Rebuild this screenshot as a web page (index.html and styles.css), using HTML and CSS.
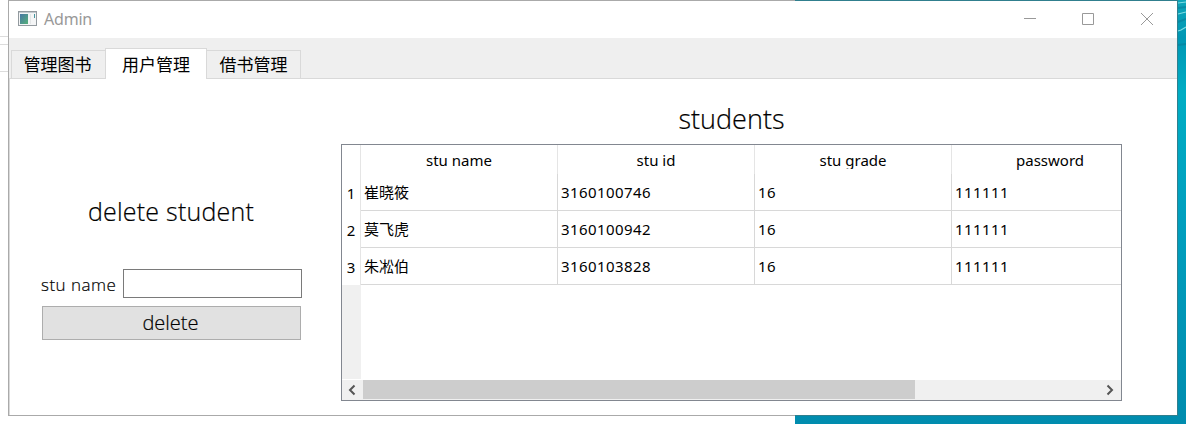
FILE: index.html
```html
<!DOCTYPE html>
<html lang="zh-CN">
<head>
<meta charset="utf-8">
<title>Admin</title>
<link rel="stylesheet" href="styles.css">
</head>
<body>
<div class="desktop">
  <svg class="wallpaper" width="391" height="424" viewBox="0 0 391 424">
    <defs><linearGradient id="sea" x1="0" y1="0" x2="0" y2="1">
      <stop offset="0" stop-color="#0fa5b9"/><stop offset=".09" stop-color="#0097b4"/><stop offset=".22" stop-color="#00adc4"/><stop offset=".5" stop-color="#00a0bf"/><stop offset="1" stop-color="#008cae"/>
    </linearGradient></defs>
    <rect width="391" height="424" fill="url(#sea)"/>
    <g fill="none" stroke="#7edce3" stroke-width="1.2">
      <path d="M383 3l8-1" /><path d="M383 14l8-2"/><path d="M383 31l3-1 5-3"/>
    </g>
    <g fill="none" stroke="#087e9b" stroke-width="2" opacity=".6"><path d="M383 8l8-1"/><path d="M383 22l8-3"/><path d="M383 45l8-1"/></g>
  </svg>
  <div class="back-lines"></div>
  <main class="window">
    <header class="titlebar">
      <svg class="app-icon" width="20" height="16" viewBox="0 0 20 16">
        <defs><linearGradient id="pane" x1="0" y1="0" x2="1" y2="1"><stop offset="0" stop-color="#4777a5"/><stop offset="1" stop-color="#55b079"/></linearGradient></defs>
        <rect x=".5" y=".5" width="18" height="14" fill="#f4f5f6" stroke="#939a9f"/>
        <path d="M1 1.500h17" stroke="#c4cbd0"/>
        <rect x="2" y="3" width="8" height="10" fill="url(#pane)"/>
        <path d="M12.500 3v10" stroke="#e2e5e6"/><path d="M16.500 3v4" stroke="#4596a0"/>
      </svg>
      <span class="title">Admin</span>
      <svg class="controls" width="132" height="14" viewBox="0 0 132 14" fill="none" stroke="#999">
        <path d="M0 6.500h12M58.500 1.500h11v11h-11zM117 1l12 12M129 1l-12 12"/>
      </svg>
    </header>
    <nav class="tabs">
      <div class="tab first">管理图书</div><div class="tab active">用户管理</div><div class="tab last">借书管理</div>
    </nav>
    <div class="page">
      <section class="form">
        <h2 class="form-title">delete student</h2>
        <div class="field"><label class="label" for="name">stu name</label><input class="input" id="name"></div>
        <button class="button">delete</button>
      </section>
      <section class="list">
        <h1 class="list-title">students</h1>
        <div class="table">
          <div class="row head"><div class="num"></div><div class="cell">stu name</div><div class="cell">stu id</div><div class="cell"><span class="clip">stu grade</span></div><div class="cell">password</div></div>
          <div class="row"><div class="num">1</div><div class="cell">崔晓筱</div><div class="cell digits">3160100746</div><div class="cell digits">16</div><div class="cell digits">111111</div></div>
          <div class="row"><div class="num">2</div><div class="cell">莫飞虎</div><div class="cell digits">3160100942</div><div class="cell digits">16</div><div class="cell digits">111111</div></div>
          <div class="row"><div class="num">3</div><div class="cell">朱凇伯</div><div class="cell digits">3160103828</div><div class="cell digits">16</div><div class="cell digits">111111</div></div>
          <div class="gutter"></div>
          <div class="scrollbar">
            <svg class="arrow" width="21" height="20" fill="none" stroke="#555" stroke-width="2"><path d="M12.500 5.500L8 10l4.500 4.500"/></svg>
            <div class="track"><div class="thumb"></div></div>
            <svg class="arrow" width="21" height="20" fill="none" stroke="#555" stroke-width="2"><path d="M7.500 5.500L12 10l-4.500 4.500"/></svg>
          </div>
        </div>
      </section>
    </div>
  </main>
</div>
</body>
</html>
```
FILE: styles.css
```css
* { box-sizing: border-box; }
body { margin: 0; background: #fff; color: #000; font-family: "Noto Sans", "Noto Sans CJK SC", sans-serif; }
.desktop { position: relative; width: 1186px; height: 424px; padding-left: 8px; overflow: hidden; }
.wallpaper { position: absolute; left: 795px; top: 0; }
.back-lines { position: absolute; left: 0; top: 36px; width: 8px; height: 36px; border: solid #dcdcdc; border-width: 1px 0; background: linear-gradient(#dcdcdc, #dcdcdc) 0 7px / 8px 1px no-repeat; }
.window { position: relative; width: 1170px; height: 416px; border: 1px solid #aaa; border-right-color: #307f8e; background: #fff; }
.window::before, .window::after { content: ""; position: absolute; left: 786px; right: -1px; height: 1px; background: #307f8e; }
.window::before { top: -1px; }
.window::after { bottom: -1px; }
.titlebar { display: flex; height: 37px; padding: 10px 21px 0 9px; }
.title { margin-left: 6px; font-size: 16px; line-height: 17px; color: #999; letter-spacing: -.2px; }
.controls { margin-left: auto; margin-top: 1px; }
.tabs { display: flex; align-items: flex-end; height: 41px; padding-left: 2px; background: #efefef; box-shadow: inset 0 -1px #d9d9d9; }
.tab { width: 94px; height: 29px; border: 1px solid #d9d9d9; border-right: 0; font-size: 17px; line-height: 28px; text-align: center; white-space: nowrap; }
.tab.first { padding-right: 2px; }
.tab.active { width: 102px; height: 31px; border-right: 1px solid #d9d9d9; border-bottom: 0; background: #fff; line-height: 31px; }
.tab.last { border-left: 0; border-right: 1px solid #d9d9d9; }
.page { display: flex; height: 336px; padding-left: 31px; border-left: 1px solid #d9d9d9; }
.form { width: 261px; padding-top: 114px; }
.form-title, .label, .button, .list-title { font-family: "Open Sans", sans-serif; font-weight: 300; -webkit-text-stroke: .2px #000; white-space: nowrap; }
.form-title { margin: 0 1px 0 0; font-size: 25px; line-height: 37px; height: 38px; letter-spacing: .22px; text-align: center; }
.field { display: flex; justify-content: space-between; margin-top: 38px; }
.label { font-size: 17px; line-height: 32px; letter-spacing: .5px; }
.input { width: 179px; height: 29px; padding: 0; border: 1px solid #7a7a7a; background: #fff; }
.button { display: block; width: 259px; height: 34px; margin: 5px 0 0 1px; padding: 0 2px 0 0; border: 1px solid #adadad; background: #e1e1e1; color: #000; font-size: 20px; line-height: 32px; }
.list { width: 781px; margin-left: 39px; padding-top: 20px; }
.list-title { margin: 0; font-size: 27px; line-height: 40px; height: 45px; text-align: center; }
.table { height: 257px; border: 1px solid #828790; overflow: hidden; }
.row { display: grid; grid-template: 37px / 19px repeat(4, 197px); font-size: 15px; }
.row.head { grid-template-rows: 29px; }
.num { border-right: 1px solid #e5e5e5; text-align: center; line-height: 38px; }
.cell { padding-left: 3px; border: solid #d8d8d8; border-width: 0 1px 1px 0; white-space: nowrap; line-height: 37px; }
.digits { letter-spacing: .43px; }
.head .cell { padding: 0; border-bottom: 0; border-color: #e5e5e5; text-align: center; line-height: 30px; }
.clip { display: block; height: 24px; overflow: hidden; }
.gutter { width: 19px; height: 94px; background: #f0f0f0; }
.scrollbar { display: flex; height: 20px; margin-top: 1px; background: #f0f0f0; }
.track { flex: 1; }
.thumb { width: 552px; height: 19px; background: #cdcdcd; }
```
